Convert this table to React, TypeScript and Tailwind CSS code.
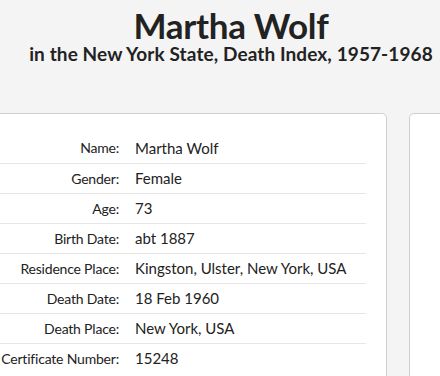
const rows = [
  { label: 'Name:', value: 'Martha Wolf' },
  { label: 'Gender:', value: 'Female' },
  { label: 'Age:', value: '73' },
  { label: 'Birth Date:', value: 'abt 1887' },
  { label: 'Residence Place:', value: 'Kingston, Ulster, New York, USA' },
  { label: 'Death Date:', value: '18 Feb 1960' },
  { label: 'Death Place:', value: 'New York, USA' },
  { label: 'Certificate Number:', value: '15248' },
]

export default function App() {
  return (
    <div className="h-[376px] overflow-hidden bg-[#f4f4f4] text-[#222] font-['Lato','Liberation_Sans',sans-serif]">
      {/* Header */}
      <div className="w-[462px] text-center pt-[5px]">
        <h1 className="text-[35px] font-bold leading-[40px] tracking-[-0.3px]">Martha Wolf</h1>
        <h2 className="text-[19px] font-bold leading-[18px] tracking-[0.1px]">
          in the New York State, Death Index, 1957-1968
        </h2>
      </div>

      {/* Cards */}
      <div className="flex gap-[22px] mt-[50px] -ml-[40px]">
        <div className="w-[427px] shrink-0 h-[300px] bg-white border border-[#cfcfcf] rounded-[5px] pt-[19px] pr-[20px]">
          <table className="w-full border-collapse">
            <tbody>
              {rows.map((row, i) => (
                <tr key={row.label} className={i < rows.length - 1 ? 'border-b border-[#e6e6e6]' : ''}>
                  <td className="w-[174px] h-[30px] text-right text-[14px] tracking-[-0.2px] pr-[16px] text-[#222] whitespace-nowrap">
                    {row.label}
                  </td>
                  <td className="h-[30px] text-[15px] whitespace-nowrap">{row.value}</td>
                </tr>
              ))}
            </tbody>
          </table>
        </div>
        <div className="w-[300px] shrink-0 h-[300px] bg-white border border-[#cfcfcf] rounded-[5px]" />
      </div>
    </div>
  )
}
